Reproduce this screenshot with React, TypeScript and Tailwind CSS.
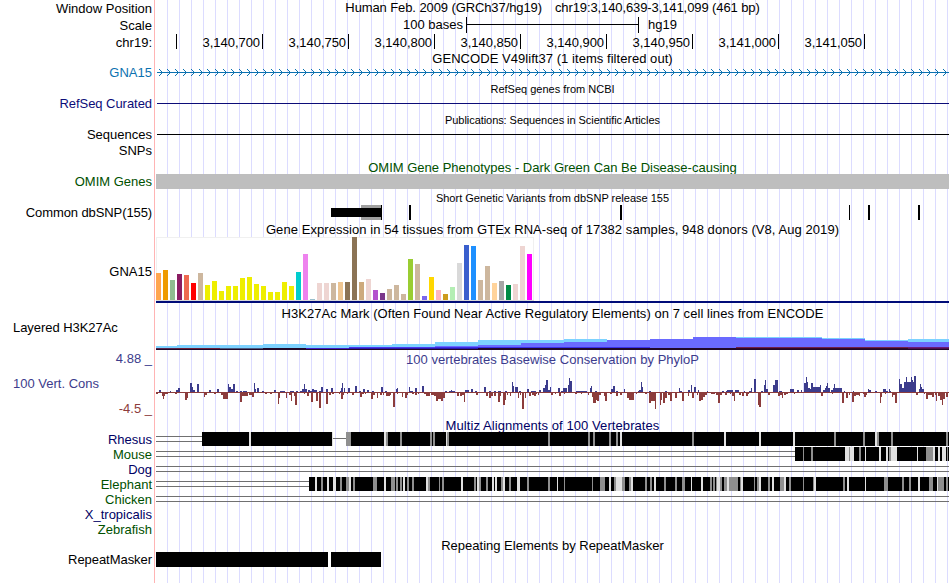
import type { ReactNode } from "react";

// plot area goes from LEFT to LEFT + WIDTH, svg coords are page pixels
const LEFT = 156
const WIDTH = 793

const labels = [
  { text: "Window Position", cls: "h-[17px]" },
  { text: "Scale", cls: "h-[17px]" },
  { text: "chr19:", cls: "h-[30px]" },
  { text: "GNA15", cls: "h-[31px] text-[#0c72b0]" },
  { text: "RefSeq Curated", cls: "h-[31px] tracking-[-0.05px] text-[#0c0c78]" },
  { text: "Sequences", cls: "h-4" },
  { text: "SNPs", cls: "h-[31px]" },
  { text: "OMIM Genes", cls: "h-[31px] text-[#005000]" },
  { text: "Common dbSNP(155)", cls: "h-[59px] tracking-[-0.1px]" },
  { text: "GNA15", cls: "h-14" },
  { text: "Layered H3K27Ac", cls: "h-[31px] self-start pl-[13px] tracking-[-0.05px]" },
  { text: "4.88 _", cls: "h-[25px] text-[#3c3c8c]" },
  { text: "100 Vert. Cons", cls: "h-[25px] self-start pl-[13px] text-[#3c3c8c]" },
  { text: "-4.5 _", cls: "h-[31px] text-[#8c3c3c]" },
  { text: "Rhesus", cls: "h-[15px] text-[#000064]" },
  { text: "Mouse", cls: "h-[15px] text-[#005000]" },
  { text: "Dog", cls: "h-[15px] text-[#000064]" },
  { text: "Elephant", cls: "h-[15px] text-[#005000]" },
  { text: "Chicken", cls: "h-[15px] text-[#005000]" },
  { text: "X_tropicalis", cls: "h-[15px] text-[#000064]" },
  { text: "Zebrafish", cls: "h-[30px] text-[#005000]" },
  { text: "RepeatMasker", cls: "h-[31px] tracking-[-0.05px]" },
]

const positions = ["3,140,700", "3,140,750", "3,140,800", "3,140,850", "3,140,900", "3,140,950", "3,141,000", "3,141,050"]

const yellow = Array(13).fill("#eeee00")
const tissueColors = [
  "#ffa54f", "#ee9a00", "#8fbc8f", "#8b1c62", "#ee6a50", "#ff0000", "#cdb79e", ...yellow,
  "#00cdcd", "#ee82ee", "#9ac0cd", "#eed5d2", "#eed5d2", "#cdb79e", "#eec591", "#8b7355",
  "#8b7355", "#cdaa7d", "#eed5d2", "#b452cd", "#7a378b", "#cdb79e", "#cdb79e", "#cdb79e",
  "#9acd32", "#cdb79e", "#7a67ee", "#ffd700", "#ffb6c1", "#cd9b1d", "#b4eeb4", "#d9d9d9",
  "#3a5fcd", "#1e90ff", "#cdb79e", "#cdb79e", "#ffd39b", "#a6a6a6", "#008b45", "#eed5d2",
  "#eed5d2", "#ff00ff",
]
const tissueHeights = [
  27, 30, 20, 26, 25, 17, 27, 15, 19, 9, 14, 14, 22, 23, 16, 14, 8, 8, 18, 14, 28, 46, 1, 17, 17, 17, 18, 18,
  63, 18, 21, 10, 7, 11, 15, 6, 41, 36, 4, 23, 10, 6, 13, 37, 55, 54, 20, 34, 17, 19, 15, 16, 54, 46,
]

// [x start, light top, blue top, color of row 347, color of row 348]
const h3k: [number, number, number, string, string][] = [
  [156, 346, 348, "", "#5a2850"],
  [177, 345, 348, "", "#702038"],
  [220, 345, 348, "", "#4a5a80"],
  [263, 344, 348, "", "#200828"],
  [306, 345, 348, "", "#4020c8"],
  [349, 345, 347, "#4838f0", "#2a1ab0"],
  [392, 344, 347, "#4838f0", "#2a1ab0"],
  [435, 342, 346, "#3a30e8", "#2a1ab0"],
  [478, 340, 345, "#3a30e8", "#200828"],
  [521, 340, 343, "#3a30e8", "#200828"],
  [564, 339, 342, "#3a30e8", "#200828"],
  [607, 340, 340, "#3a30e8", "#200828"],
  [650, 339, 339, "", "#200828"],
  [693, 337, 337, "", "#200828"],
  [736, 337, 338, "#702048", "#300828"],
  [779, 337, 338, "#702048", "#300828"],
  [822, 338, 339, "#702048", "#300828"],
  [865, 340, 341, "#702048", "#300828"],
  [908, 339, 342, "#6a1a78", "#501050"],
]

// "x width height" triples
const conserved = `159 2 2,170 1 1,176 2 2,178 2 4,190 2 9,192 1 5,193 2 2,197 2 8,209 2 2,217 2 3,228 1 8,229 2 5,231 2 3,233 2 8,
236 2 1,240 2 1,243 4 1,254 1 9,255 1 3,257 2 4,262 2 1,274 2 2,280 5 1,290 4 1,296 2 1,300 3 1,302 2 3,304 1 8,305 2 3,308 2 2,
310 2 1,312 2 3,314 3 2,319 2 1,321 2 5,326 2 3,331 2 4,340 2 1,341 2 4,342 1 9,344 1 4,348 2 4,355 2 6,359 2 1,363 2 3,367 2 2,
372 2 1,381 2 5,385 2 1,396 1 3,397 1 4,409 1 5,410 3 1,415 2 4,422 2 6,445 2 1,449 6 1,451 1 2,465 4 2,471 2 3,475 2 1,484 2 5,
489 2 1,494 2 1,498 3 1,505 2 1,512 1 10,513 1 6,515 3 5,519 2 1,527 2 3,531 3 1,534 2 1,539 2 2,543 2 4,545 1 7,546 2 12,548 2 2,
550 1 5,558 2 4,561 2 1,563 3 4,566 1 4,568 1 7,569 1 14,570 2 11,576 11 1,590 1 4,591 1 6,595 2 1,611 2 3,613 2 6,616 2 1,624 1 3,
638 2 1,639 3 2,641 1 10,642 1 5,649 2 1,665 2 1,679 1 4,680 2 1,688 2 2,691 1 7,694 2 5,698 1 2,707 1 1,722 2 1,727 6 2,735 4 2,
726 2 1,744 1 1,749 2 1,751 1 4,754 2 13,761 2 1,764 1 7,765 1 12,766 2 3,773 2 7,775 3 12,779 3 1,790 4 3,797 2 2,801 1 2,804 2 9,
806 1 15,807 1 10,808 2 4,810 1 3,811 2 9,813 2 5,815 5 5,820 1 7,823 2 2,825 1 4,826 1 6,827 1 9,828 2 4,831 2 2,833 1 4,834 1 8,
835 7 4,844 1 1,853 1 1,868 1 3,869 2 2,875 2 1,883 3 3,886 2 1,889 1 3,890 1 1,899 1 13,900 2 8,902 2 4,904 12 10,906 1 15,
911 1 15,912 1 12,914 2 16,919 1 3,920 1 8,921 1 5,922 2 3`

const accelerated = `156 2 2,162 3 4,163 1 7,165 3 2,175 2 2,180 4 1,185 2 8,187 1 6,204 1 5,205 2 3,214 2 2,221 2 3,223 5 7,240 2 10,
242 2 4,244 4 4,249 3 3,252 2 5,265 2 2,270 2 2,278 1 12,279 1 6,286 1 6,289 3 3,291 1 9,294 1 4,295 2 13,304 1 2,307 2 4,311 2 10,
316 2 9,319 2 16,326 2 12,329 2 3,332 2 2,339 1 2,341 2 7,343 1 3,347 1 2,352 2 3,360 2 5,362 2 2,365 1 2,371 2 7,373 2 3,377 1 6,
380 2 3,383 1 3,386 4 4,390 1 3,393 2 15,397 1 2,402 1 5,405 2 6,407 1 3,412 2 2,415 2 3,418 1 2,424 2 2,426 4 4,431 3 3,434 3 4,
436 2 9,438 3 7,441 2 9,443 2 6,457 2 4,460 2 4,462 2 3,464 1 10,476 2 3,486 2 4,489 2 6,491 2 4,494 2 4,498 2 10,500 1 4,503 2 13,
505 1 8,507 1 3,510 1 4,518 1 6,520 1 3,522 2 17,525 1 6,529 2 4,532 2 3,534 2 4,536 1 2,538 1 3,551 2 3,555 1 2,559 2 4,564 1 2,
575 2 2,581 1 2,588 1 3,592 1 5,593 3 11,596 1 8,597 2 9,599 2 3,604 1 4,605 2 9,610 2 2,616 2 4,620 2 3,627 2 6,629 5 8,636 1 2,
645 2 2,649 2 11,651 4 9,655 1 17,660 1 13,661 1 8,663 2 11,665 2 6,668 2 3,670 2 9,675 2 6,682 2 9,688 1 4,692 2 6,697 1 3,699 2 9,
701 2 8,703 2 5,705 2 3,711 4 2,716 2 3,718 2 11,720 2 3,725 2 3,730 1 2,732 2 4,734 1 9,739 2 3,742 2 4,746 2 4,748 1 2,758 1 13,
759 2 15,768 2 3,778 2 4,780 2 3,782 1 6,784 2 3,786 2 2,794 1 2,821 2 4,832 1 2,842 2 11,846 2 6,849 1 3,852 2 10,854 2 4,856 3 3,
859 1 4,863 1 2,864 2 5,866 1 3,880 1 11,881 1 5,885 1 2,892 1 5,893 2 3,895 2 11,916 2 3,924 1 2,926 2 7,928 4 3,932 2 5,935 1 3,
936 1 9,938 2 4,940 2 8,942 1 13,943 2 7,946 2 5`

// "x width" pairs for weaker alignment, gray is mid score and light is low score
const rhesusGray = "346 5,386 2,400 2,430 2,433 2,447 2,548 2,588 2,593 2,609 2,616 2,692 2,834 2,863 2,877 2,891 2,946 2"
const rhesusLight = "249 2,332 1,384 2,446 1,620 2,724 2,759 2,793 2,875 2"
const mouseGray = "803 1,811 2,849 1,859 2,889 2,926 7,947 1"
const mouseLight = "845 4,850 4,865 1,879 2,886 2,891 6,917 1,933 2,938 2,942 4"
const elephantGray = `321 2,340 2,346 3,353 2,373 4,391 4,396 2,400 2,407 2,412 2,428 2,439 1,442 2,474 2,479 2,486 2,501 2,509 2,527 2,
548 2,564 1,592 1,600 5,614 2,622 3,629 2,645 2,650 2,664 2,675 2,682 3,710 2,713 2,716 1,720 2,724 3,729 9,740 1,754 1,757 2,768 2,
780 4,789 2,803 1,813 1,843 2,884 4,902 2,909 2,929 4,938 6,946 2`
const elephantLight = `315 2,327 2,333 3,349 2,384 2,403 2,426 2,461 2,477 2,492 2,495 2,503 2,517 3,557 1,609 2,616 6,631 2,654 2,691 1,
701 2,717 3,727 2,741 2,759 2,772 2,784 2,814 2,847 2,865 1,918 2,937 1`

const parse = (data: string) => data.split(",").map((item) => item.trim().split(" ").map(Number))

const Title = ({ children, className = "h-[15px]" }: { children: ReactNode, className?: string }) => (
  <h2 className={`shrink-0 text-center whitespace-pre ${className}`}>{children}</h2>
)

const SmallTitle = ({ children, className = "" }: { children: ReactNode, className?: string }) => (
  <h2 className={`h-3 shrink-0 text-center text-[11px] leading-3 whitespace-pre ${className}`}>{children}</h2>
)

const Track = ({ y, height, children }: { y: number, height: number, children: ReactNode }) => (
  <svg width={WIDTH} height={height} viewBox={`${LEFT} ${y} ${WIDTH} ${height}`} shapeRendering="crispEdges" className="block shrink-0">
    {children}
  </svg>
)

const Blocks = ({ data, y, fill }: { data: string, y: number, fill: string }) => (
  <>
    {parse(data).map(([x, w]) => <rect key={x} x={x} y={y} width={w} height={14} fill={fill} />)}
  </>
)

const DoubleLine = ({ y, to }: { y: number, to: number }) => (
  <>
    <rect x={LEFT} y={y + 4} width={to - LEFT} height={1} fill="#707070" />
    <rect x={LEFT} y={y + 9} width={to - LEFT} height={1} fill="#707070" />
  </>
)

const Labels = () => (
  <div className="flex w-[155px] shrink-0 flex-col items-end border-r border-[#ffb4b4] pt-px">
    {labels.map((label, i) => (
      <div key={i} className={`pr-[2px] whitespace-nowrap ${label.cls}`}>{label.text}</div>
    ))}
  </div>
)

const Ruler = () => (
  <>
    <div className="flex h-4 shrink-0">
      <div className="w-[310px] pr-[3px] text-right">100 bases</div>
      <div className="flex w-[173px] flex-col border-x border-black">
        <div className="mt-[7px] h-px bg-black" />
      </div>
      <div className="pl-[9px]">hg19</div>
    </div>
    <div className="flex h-[18px] shrink-0 pt-px">
      <div className="h-[15px] w-[21px] border-r border-black" />
      {positions.map((pos) => (
        <div key={pos} className="h-[15px] w-[86px] border-r border-black pr-[2px] text-right leading-[17px] tracking-[-0.05px]">{pos}</div>
      ))}
    </div>
  </>
)

const GeneLine = () => (
  <Track y={66} height={17}>
    <rect x={157} y={72} width={792} height={1} fill="#0c72b0" />
    {Array.from({ length: 99 }, (_, i) => 162 + i * 8).map((x) => (
      <path key={x} d={`M${x - 3} 69h1v1h-1zM${x - 2} 70h1v1h-1zM${x - 1} 71h1v1h-1zM${x} 72h1v1h-1zM${x - 1} 73h1v1h-1zM${x - 2} 74h1v1h-1zM${x - 3} 75h1v1h-1z`} fill="#0c72b0" />
    ))}
  </Track>
)

const Expression = () => (
  <Track y={237} height={69}>
    <rect x={156} y={237} width={378} height={64} fill="#f0f0f0" />
    <rect x={157} y={238} width={376} height={62} fill="#fff" />
    <rect x={156} y={300} width={378} height={1} fill="#d8d8d8" />
    {tissueHeights.map((h, i) => (
      <rect key={i} x={LEFT + i * 7} y={300 - h} width={5} height={h} fill={tissueColors[i]} />
    ))}
    <rect x={156} y={301} width={793} height={2} fill="#000c78" />
  </Track>
)

const H3K27Ac = () => (
  <Track y={321} height={31}>
    {h3k.map(([x, light, blue, c347, c348]) => (
      <g key={x}>
        <rect x={x} y={light} width={43} height={350 - light} fill="#7dd2ff" />
        <rect x={x} y={blue} width={43} height={350 - blue} fill="#6a6aff" />
        {c347 && <rect x={x} y={347} width={43} height={1} fill={c347} />}
        <rect x={x} y={348} width={43} height={1} fill={c348} />
        <rect x={x} y={349} width={43} height={1} fill="#200828" />
      </g>
    ))}
  </Track>
)

const Conservation = () => (
  <Track y={367} height={51}>
    <rect x={156} y={392} width={793} height={1} fill="#8c3c3c" />
    {parse(conserved).map(([x, w, h]) => <rect key={x} x={x} y={392 - h} width={w} height={h} fill="#3c3c8c" />)}
    {parse(accelerated).map(([x, w, h]) => <rect key={x} x={x} y={392} width={w} height={h} fill="#8c3c3c" />)}
  </Track>
)

const Alignments = () => (
  <Track y={432} height={106}>
    <DoubleLine y={432} to={202} />
    <rect x={202} y={432} width={130} height={14} />
    <rect x={333} y={438} width={13} height={1} fill="#707070" />
    <rect x={346} y={432} width={603} height={14} />
    <Blocks data={rhesusGray} y={432} fill="#8f8f8f" />
    <Blocks data={rhesusLight} y={432} fill="#e1e1e1" />

    <DoubleLine y={447} to={795} />
    <rect x={795} y={447} width={154} height={14} />
    <Blocks data={mouseGray} y={447} fill="#8f8f8f" />
    <Blocks data={mouseLight} y={447} fill="#e1e1e1" />

    <DoubleLine y={462} to={949} />

    <DoubleLine y={477} to={309} />
    <rect x={309} y={477} width={640} height={14} />
    <Blocks data={elephantGray} y={477} fill="#8f8f8f" />
    <Blocks data={elephantLight} y={477} fill="#e1e1e1" />

    <DoubleLine y={492} to={949} />
  </Track>
)

const App = () => {
  return (
    <main className="flex h-[583px] w-[949px] overflow-hidden bg-white font-['Liberation_Sans',Arial,sans-serif] text-[13px] leading-[15px] text-black">
      <Labels />
      <div className="ml-px flex w-[793px] flex-col bg-[linear-gradient(to_right,#dcdcff_1px,transparent_1px)] bg-[length:12px_12px] bg-[position:11px_0]">
        <Title className="flex h-[17px] justify-center gap-[13px] tracking-[-0.1px]">
          <span>Human Feb. 2009 (GRCh37/hg19)</span>
          <span>chr19:3,140,639-3,141,099 (461 bp)</span>
        </Title>
        <Ruler />
        <Title className="h-[15px] tracking-[0.05px]">GENCODE V49lift37 (1 items filtered out)</Title>
        <GeneLine />
        <SmallTitle>RefSeq genes from NCBI</SmallTitle>
        <Track y={95} height={19}>
          <rect x={157} y={103} width={792} height={1} fill="#0c0c78" />
        </Track>
        <SmallTitle className="tracking-[-0.06px]">Publications: Sequences in Scientific Articles</SmallTitle>
        <Track y={126} height={34}>
          <rect x={157} y={134} width={792} height={1} />
        </Track>
        <Title className="h-[14px] text-[#005000]">OMIM Gene Phenotypes - Dark Green Can Be Disease-causing</Title>
        <Track y={174} height={18}>
          <rect x={156} y={174} width={793} height={15} fill="#bebebe" />
        </Track>
        <SmallTitle>Short Genetic Variants from dbSNP release 155</SmallTitle>
        <Track y={204} height={18}>
          <rect x={361} y={205} width={20} height={15} fill="#a0a0a0" />
          <rect x={331} y={208} width={50} height={9} />
          {parse("381 1,409 2,620 2,849 1,868 2,918 2").map(([x, w]) => (
            <rect key={x} x={x} y={205} width={w} height={15} />
          ))}
        </Track>
        <Title className="h-[15px] tracking-[0.065px]">Gene Expression in 54 tissues from GTEx RNA-seq of 17382 samples, 948 donors (V8, Aug 2019)</Title>
        <Expression />
        <Title className="h-[15px] tracking-[0.05px]">H3K27Ac Mark (Often Found Near Active Regulatory Elements) on 7 cell lines from ENCODE</Title>
        <H3K27Ac />
        <Title className="h-[15px] tracking-[0.02px] text-[#3c3c8c]">100 vertebrates Basewise Conservation by PhyloP</Title>
        <Conservation />
        <Title className="h-[14px] tracking-[0.08px] text-[#000064]">Multiz Alignments of 100 Vertebrates</Title>
        <Alignments />
        <Title className="h-[14px]">Repeating Elements by RepeatMasker</Title>
        <Track y={552} height={31}>
          <rect x={156} y={552} width={172} height={15} />
          <rect x={331} y={552} width={50} height={15} />
        </Track>
      </div>
    </main>
  );
};

export default App;
